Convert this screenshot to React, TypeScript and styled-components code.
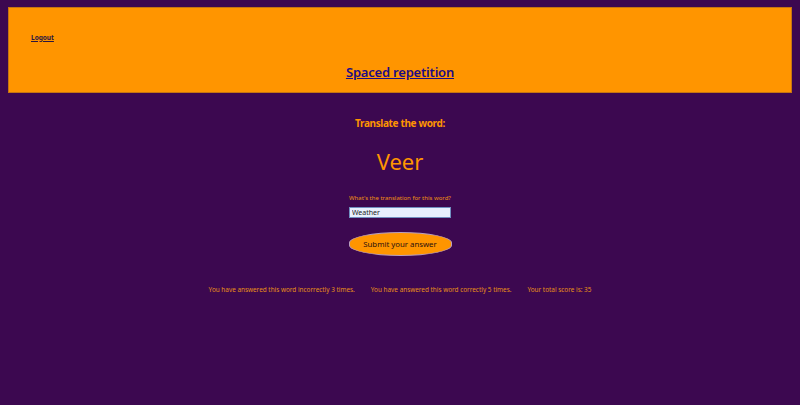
import React from "react";
import styled, { createGlobalStyle } from "styled-components";

const Global = createGlobalStyle`
  html, body { background: #3c0850; }
  body { margin: 7px 8px 8px; font-family: "Noto Sans", "Open Sans", sans-serif; }
`;

const Header = styled.header`
  background: #ff9500;
  border: 1px solid #c57512;
  display: flex;
  flex-direction: column;
  padding: 0 22px;
  box-sizing: border-box;
  height: 86px;
`;

const LogoutRow = styled.div`
  padding-top: 21px;
  height: 16px;
  display: flex;
  align-items: center;
`;

const LogoutLink = styled.a`
  font-size: 6.5px;
  font-weight: 700;
  color: #2b1540;
  text-decoration: underline;
`;

const Title = styled.h1`
  margin: 0;
  margin-top: 18px;
  text-align: center;
  font-size: 13px;
  letter-spacing: -0.2px;
  font-weight: 600;
  a { color: #1c0b86; text-decoration: underline; }
`;

const Main = styled.main`
  display: flex;
  flex-direction: column;
  align-items: center;
  color: #ff9500;
`;

const Prompt = styled.h2`
  margin: 23px 0 0;
  font-size: 10px;
  letter-spacing: -0.35px;
  font-weight: 700;
`;

const Word = styled.div`
  margin-top: 16px;
  font-size: 22px;
`;

const Label = styled.label`
  margin-top: 18px;
  font-size: 6px;
  color: #f09010;
`;

const Input = styled.input`
  margin-top: 5px;
  width: 102px;
  height: 11px;
  box-sizing: border-box;
  background: #e8f0fe;
  border: 1px solid #7090c0;
  font-family: inherit;
  font-size: 7px;
  padding: 0 2px;
  color: #222;
  outline: none;
`;

const Submit = styled.button`
  margin-top: 14px;
  width: 103px;
  height: 24px;
  border-radius: 50% / 45%;
  background: #ff9500;
  border: 1px solid #b89fc0;
  font-family: inherit;
  font-size: 7.8px;
  color: #2a1010;
  padding: 0;
`;

const Stats = styled.div`
  margin-top: 29px;
  display: flex;
  gap: 16px;
  font-size: 6.4px;
  color: #e89018;
`;

export default function App() {
  return (
    <>
      <Global />
      <Header>
        <LogoutRow>
          <LogoutLink href="#">Logout</LogoutLink>
        </LogoutRow>
        <Title>
          <a href="#">Spaced repetition</a>
        </Title>
      </Header>
      <Main>
        <Prompt>Translate the word:</Prompt>
        <Word>Veer</Word>
        <Label htmlFor="answer">What's the translation for this word?</Label>
        <Input id="answer" defaultValue="Weather" />
        <Submit type="button">Submit your answer</Submit>
        <Stats>
          <span>You have answered this word incorrectly 3 times.</span>
          <span>You have answered this word correctly 5 times.</span>
          <span>Your total score is: 35</span>
        </Stats>
      </Main>
    </>
  );
}
